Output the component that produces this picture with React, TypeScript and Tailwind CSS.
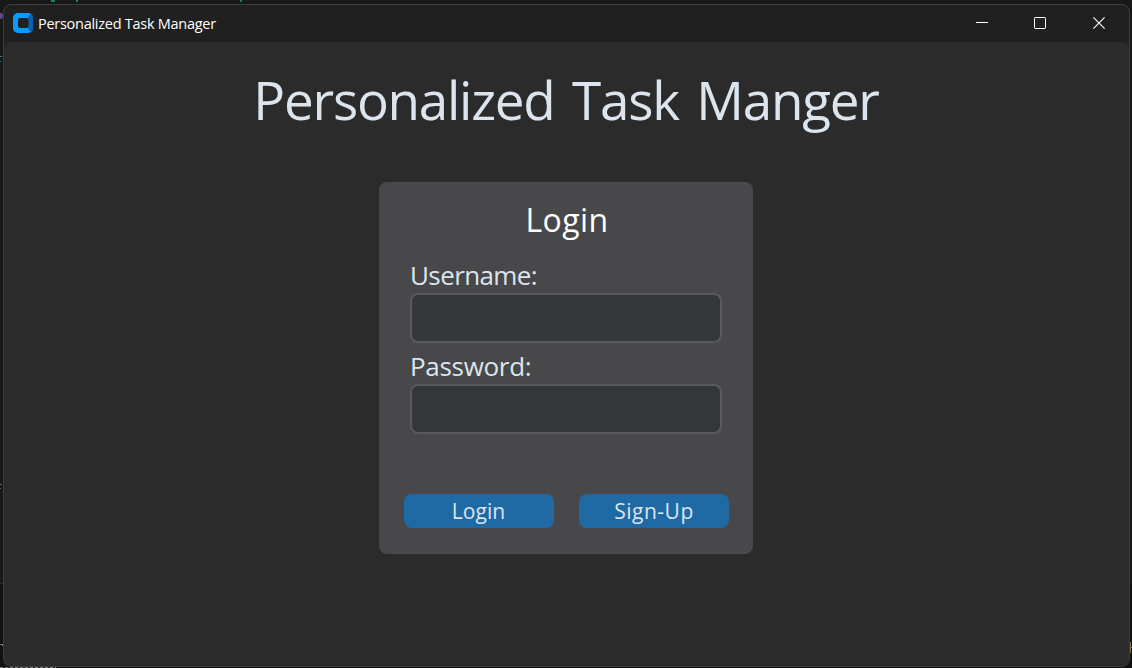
import React from 'react';

function AppIcon() {
  return (
    <svg width="20" height="20" viewBox="0 0 20 20" className="relative -top-px shrink-0">
      <rect width="20" height="20" rx="5" fill="#0a9bff" />
      <path d="M15 4 L18 1 Q20 2 20 5 V15 Q20 18 18 19 L15 16Z" fill="#0862b0" />
      <rect x="5" y="5" width="10.5" height="10" rx="2" fill="#202020" />
    </svg>
  );
}

function TitleBar() {
  return (
    <header className="flex h-[37px] shrink-0 items-center pl-[9px]">
      <AppIcon />
      <span className="ml-[5px] whitespace-nowrap text-[14.5px] leading-5 tracking-[-0.27px] text-white">
        Personalized Task Manager
      </span>
      <div className="ml-auto flex h-[35px] self-start">
        <button aria-label="Minimize" className="flex w-[58px] items-center justify-center">
          <svg width="12" height="12" shapeRendering="crispEdges"><path d="M0 5.5H12" stroke="#fff" /></svg>
        </button>
        <button aria-label="Maximize" className="flex w-[58px] items-center justify-center">
          <svg width="12" height="12"><rect x=".5" y=".5" width="11" height="11" rx=".7" fill="none" stroke="#fff" /></svg>
        </button>
        <button aria-label="Close" className="flex w-[60px] items-center justify-center">
          <svg width="12" height="12"><path d="M.4 .4L11.6 11.6M11.6 .4L.4 11.6" stroke="#fff" strokeWidth="1.1" /></svg>
        </button>
      </div>
    </header>
  );
}

function Field({ label, type, spacing }: { label: string; type: string; spacing: string }) {
  return (
    <label className="block">
      <span className={`block h-[35px] whitespace-nowrap text-[26px] leading-[35px] text-[#dce4ee] ${spacing}`}>{label}</span>
      <input type={type} className="block h-[50px] w-[312px] rounded-[8px] border-2 border-[#565b5e] bg-[#343638] px-3 text-2xl text-[#dce4ee] outline-none" />
    </label>
  );
}

function ActionButton({ children, spacing }: { children: string; spacing: string }) {
  return (
    <button className={`h-[34px] w-[150px] rounded-[8px] bg-[#1f6aa5] text-[21px] leading-[34px] text-[#dce4ee] ${spacing}`}>
      {children}
    </button>
  );
}

export default function App() {
  return (
    <div className="relative h-[668px] w-[1132px] overflow-hidden bg-[#181818] pl-[3px] pt-[4px] font-['Open_Sans','Noto_Sans',sans-serif]">
      <div className="absolute left-[51px] top-0 h-[2px] w-[4px] bg-[#257a66]" />
      <div className="absolute left-[76px] top-0 h-[2px] w-[2px] bg-[#257a66]" />
      <div className="absolute left-[240px] top-0 h-[2px] w-[2px] bg-[#257a66]" />
      <div className="absolute left-0 top-[13px] h-[6px] w-[2px] bg-[#71447c]" />
      <div className="absolute left-[2px] top-[14px] h-[4px] w-px bg-[#3c3fa8]" />
      <div className="absolute left-0 top-[56px] h-px w-[2px] bg-[#357a98]" />
      <div className="absolute left-0 top-[61px] h-px w-px bg-[#357a98]" />
      <div className="absolute left-0 top-[484px] h-px w-[2px] bg-[#666666]" />
      <div className="absolute left-0 top-[488px] h-px w-px bg-[#666666]" />
      <div className="absolute left-0 top-[584px] h-[84px] w-[1132px] bg-[#111111]" />
      <div className="absolute left-0 top-[583px] h-px w-[3px] bg-[#2b2b2b]" />
      <div className="absolute left-0 top-[644px] h-px w-[3px] bg-[#777777]" />
      <div className="absolute left-[2px] top-[645px] h-px w-px bg-[#a08070]" />
      <div className="absolute left-0 top-[667px] h-px w-[56px] bg-[repeating-linear-gradient(90deg,#777_0_3px,#222_3px_5px)]" />
      <div className="absolute left-[1130px] top-[642px] h-[11px] w-px bg-[#89672f]" />
      <div className="absolute left-[1131px] top-[647px] h-px w-px bg-[#89672f]" />
      <div className="relative flex h-[663px] w-[1127px] flex-col overflow-hidden rounded-[8px] border border-[#3d3d3d] bg-[#202020]">
        <TitleBar />
        <main className="flex flex-1 flex-col items-center rounded-[7px] bg-[#2b2b2b] pr-px">
          <h1 className="mt-[21px] h-[73px] whitespace-nowrap text-[53px] font-[450] leading-[73px] tracking-[-1.25px] text-[#dce4ee] [word-spacing:5px]">
            Personalized Task Manger
          </h1>
          <section className="mt-[46px] flex h-[372px] w-[374px] flex-col items-center rounded-[8px] bg-[#48484a] pt-[15px]">
            <h2 className="h-[46px] pl-[2px] text-[32px] leading-[46px] tracking-[0.4px] text-white">Login</h2>
            <div className="mt-[15px] flex w-[312px] flex-col gap-[6px]">
              <Field label="Username:" type="text" spacing="tracking-[-0.6px]" />
              <Field label="Password:" type="password" spacing="tracking-[-0.3px]" />
            </div>
            <div className="mt-[60px] flex gap-[25px]">
              <ActionButton spacing="tracking-[0.1px]">Login</ActionButton>
              <ActionButton spacing="tracking-[0.5px] pl-px">Sign-Up</ActionButton>
            </div>
          </section>
        </main>
      </div>
    </div>
  );
}
